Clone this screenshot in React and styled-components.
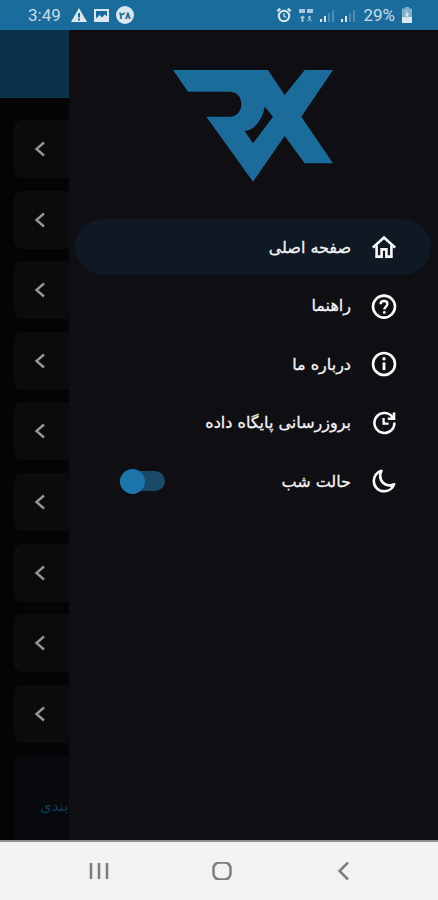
import styled, { createGlobalStyle } from "styled-components";

const GlobalStyle = createGlobalStyle`
  html, body {
    margin: 0;
    padding: 0;
    background: #000;
  }
  * {
    box-sizing: border-box;
  }
`;

const CARD_COUNT = 9;

const MENU = [
  { label: "صفحه اصلی", icon: <HomeIcon />, active: true },
  { label: "راهنما", icon: <HelpIcon /> },
  { label: "درباره ما", icon: <InfoIcon /> },
  { label: "بروزرسانی پایگاه داده", icon: <UpdateIcon /> },
  { label: "حالت شب", icon: <MoonIcon />, toggle: true },
];

export default function App() {
  return (
    <>
      <GlobalStyle />
      <Screen>
        <StatusBar>
          <StatusGroup>
            <Clock>3:49</Clock>
            <WarningIcon />
            <PictureIcon />
            <DateBadge>۲۸</DateBadge>
          </StatusGroup>
          <StatusGroup>
            <AlarmIcon />
            <NetworkIcon />
            <SignalIcon />
            <SignalIcon />
            <Percent>29%</Percent>
            <BatteryIcon />
          </StatusGroup>
        </StatusBar>

        <Body>
          <Underlay>
            <UnderHeader />
            <CardList>
              {Array.from({ length: CARD_COUNT }, (_, i) => (
                <Card key={i}>
                  <ChevronIcon />
                </Card>
              ))}
              <BottomCard>
                <BottomLabel dir="rtl">دسته بندی</BottomLabel>
              </BottomCard>
            </CardList>
          </Underlay>

          <Drawer>
            <LogoIcon />
            <Menu>
              {MENU.map((item) => (
                <MenuRow key={item.label} dir="rtl" $active={item.active}>
                  <MenuIcon>{item.icon}</MenuIcon>
                  <MenuLabel>{item.label}</MenuLabel>
                  {item.toggle && (
                    <Toggle>
                      <Knob />
                    </Toggle>
                  )}
                </MenuRow>
              ))}
            </Menu>
          </Drawer>
        </Body>

        <NavBar>
          <RecentsIcon />
          <HomeButtonIcon />
          <BackIcon />
        </NavBar>
      </Screen>
    </>
  );
}

function LogoIcon() {
  return (
    <LogoSvg viewBox="100 60 480 336" aria-hidden="true">
      <path
        fill="#1b6b9b"
        fillRule="evenodd"
        d="M100 60H385L435 135L495 60H580L485 200L580 340H495L435 258L340 395L200 200H270C292 200 305 183 305 162C305 141 292 125 270 125H145ZM375 170L400 200L340 280L315 243C345 240 368 210 375 170Z"
      />
    </LogoSvg>
  );
}

function HomeIcon() {
  return (
    <svg viewBox="0 0 26 26" width="26" height="26" fill="none" stroke="#fff" strokeWidth="2.6">
      <path d="M1.8 13.6L13 3.6L24.2 13.6" />
      <path d="M5.6 11.5V22.6H10.6V15.4H15.4V22.6H20.4V11.5" />
    </svg>
  );
}

function HelpIcon() {
  return (
    <svg viewBox="0 0 26 26" width="26" height="26" fill="none" stroke="#fff" strokeWidth="2.6">
      <circle cx="13" cy="13.6" r="11" />
      <path d="M9.6 11.2C9.6 9.2 11 8 13 8C15 8 16.4 9.2 16.4 11C16.4 13.4 13.3 13.8 13.3 16.6" strokeWidth="2.4" />
      <circle cx="13.3" cy="19.4" r="1.4" fill="#fff" stroke="none" />
    </svg>
  );
}

function InfoIcon() {
  return (
    <svg viewBox="0 0 26 26" width="26" height="26" fill="none" stroke="#fff" strokeWidth="2.6">
      <circle cx="13" cy="13" r="11" />
      <path d="M13 11.5V19" strokeWidth="2.8" />
      <circle cx="13" cy="7.8" r="1.7" fill="#fff" stroke="none" />
    </svg>
  );
}

function UpdateIcon() {
  return (
    <svg viewBox="0 0 26 26" width="26" height="26" fill="none" stroke="#fff" strokeWidth="2.6">
      <path d="M21.8 7.5A10 10 0 1 0 23.4 13.5" strokeLinecap="round" />
      <path d="M23 2.5V8.8H16.8" />
      <path d="M12.6 8V13.6H17.6" strokeWidth="2.3" />
    </svg>
  );
}

function MoonIcon() {
  return (
    <svg viewBox="0 0 26 26" width="26" height="26" fill="none" stroke="#fff" strokeWidth="2.6" strokeLinejoin="round">
      <path d="M10.5 2.8C6 4 2.8 8.2 2.8 13C2.8 18.8 7.4 23.3 13.2 23.3C17.8 23.3 21.8 20.3 23.2 16.2C21.8 17 20.2 17.4 18.4 17.4C13.6 17.4 9.2 13.4 9.2 8C9.2 6 9.6 4.4 10.5 2.8Z" />
    </svg>
  );
}

function ChevronIcon() {
  return (
    <ChevronSvg viewBox="0 0 12 16" aria-hidden="true">
      <path d="M10 1.5L2.5 8L10 14.5" />
    </ChevronSvg>
  );
}

function WarningIcon() {
  return (
    <svg viewBox="0 0 16 14" width="16" height="14">
      <path fill="#dce8ef" fillRule="evenodd" d="M8 0L16 14H0ZM7 5V9.6H9V5ZM7 10.6V12.4H9V10.6Z" />
    </svg>
  );
}

function PictureIcon() {
  return (
    <svg viewBox="0 0 15 13" width="15" height="13">
      <path fill="#dce8ef" fillRule="evenodd" d="M0 0H15V13H0ZM2 2V9.5L5.5 6L8 8.5L11 5.5L13 7.5V2Z" />
    </svg>
  );
}

function AlarmIcon() {
  return (
    <svg viewBox="0 0 16 16" width="16" height="16">
      <circle cx="8" cy="9" r="5.2" fill="none" stroke="#dce8ef" strokeWidth="2" />
      <path d="M8 6V9.2L10 10.4" fill="none" stroke="#dce8ef" strokeWidth="1.2" />
      <path fill="#dce8ef" d="M0.6 3.4L3.4 0.8L5 2.4L2 5ZM15.4 3.4L12.6 0.8L11 2.4L14 5Z" />
    </svg>
  );
}

function NetworkIcon() {
  return (
    <svg viewBox="0 0 14 15" width="14" height="15" fill="#a9c8da">
      <path d="M0 1H6V5H0ZM8 1H14V5H8ZM2.5 8H4.5V14H2.5ZM0.8 10L3.5 7.4L6.2 10ZM9.5 8H11.5V14H9.5ZM7.8 12L10.5 14.6L13.2 12Z" />
    </svg>
  );
}

function SignalIcon() {
  return (
    <svg viewBox="0 0 14 14" width="14" height="14">
      <rect x="0" y="11" width="2" height="3" fill="#dce8ef" />
      <rect x="4" y="8" width="2" height="6" fill="#dce8ef" />
      <rect x="8" y="5" width="2" height="9" fill="#4d8cb2" />
      <rect x="12" y="2" width="2" height="12" fill="#4d8cb2" />
    </svg>
  );
}

function BatteryIcon() {
  return (
    <svg viewBox="0 0 10 16" width="10" height="16">
      <path fill="#7fb0cc" d="M3 0H7V1.5H10V16H0V1.5H3Z" />
      <path fill="#dce8ef" d="M0 10H10V16H0ZM5.6 2.5L3 8.5H5L4.4 12L7 6.5H5Z" />
    </svg>
  );
}

function RecentsIcon() {
  return (
    <NavSvg viewBox="0 0 20 18" aria-hidden="true">
      <path d="M2 1V17M10 1V17M18 1V17" />
    </NavSvg>
  );
}

function HomeButtonIcon() {
  return (
    <NavSvg viewBox="0 0 20 18" aria-hidden="true">
      <rect x="1.5" y="0.5" width="17" height="17" rx="6" />
    </NavSvg>
  );
}

function BackIcon() {
  return (
    <NavSvg viewBox="0 0 20 18" aria-hidden="true">
      <path d="M14 0.5L5.5 9L14 17.5" />
    </NavSvg>
  );
}

const Screen = styled.div`
  width: 438px;
  height: 900px;
  display: flex;
  flex-direction: column;
  overflow: hidden;
`;

const StatusBar = styled.div`
  height: 30px;
  flex: none;
  display: flex;
  align-items: center;
  justify-content: space-between;
  padding: 0 26px 0 28px;
  background: #1a6c9d;
  color: #c9dce8;
  font-family: Roboto, sans-serif;
`;

const StatusGroup = styled.div`
  display: flex;
  align-items: center;
  gap: 7px;
`;

const Clock = styled.span`
  font-size: 17px;
  margin-right: 3px;
`;

const Percent = styled.span`
  font-size: 17px;
  margin-left: 1px;
`;

const DateBadge = styled.span`
  width: 18px;
  height: 18px;
  border-radius: 50%;
  background: #dce8ef;
  color: #1a6c9d;
  font-family: "DejaVu Sans", sans-serif;
  font-size: 10px;
  font-weight: 700;
  display: flex;
  align-items: center;
  justify-content: center;
`;

const Body = styled.div`
  flex: 1;
  min-height: 0;
  display: flex;
`;

const Underlay = styled.div`
  width: 69px;
  flex: none;
  overflow: hidden;
  background: #040405;
`;

const UnderHeader = styled.div`
  height: 68px;
  background: #0a3249;
`;

const CardList = styled.div`
  width: 424px;
  padding: 22px 0 0 14px;
  display: flex;
  flex-direction: column;
  gap: 12.6px;
`;

const Card = styled.div`
  height: 58px;
  flex: none;
  border-radius: 8px;
  background: #0b0b0e;
  display: flex;
  align-items: center;
  padding-left: 20px;
`;

const ChevronSvg = styled.svg`
  width: 12px;
  height: 16px;
  fill: none;
  stroke: #969699;
  stroke-width: 2.4;
`;

const BottomCard = styled(Card)`
  height: 90px;
  margin-top: 0;
  background: #07090c;
  padding: 12px 0 0 26px;
`;

const BottomLabel = styled.span`
  font-family: "DejaVu Sans", sans-serif;
  font-size: 15px;
  color: #0f3c58;
`;

const Drawer = styled.div`
  flex: 1;
  background: #0e0e13;
  padding: 40px 7px 0 6px;
  display: flex;
  flex-direction: column;
`;

const LogoSvg = styled.svg`
  width: 160px;
  height: 112px;
  margin: 0 0 37px 98px;
  flex: none;
`;

const Menu = styled.nav`
  display: flex;
  flex-direction: column;
  gap: 2.5px;
`;

const MenuRow = styled.div`
  height: 56px;
  display: flex;
  align-items: center;
  gap: 20px;
  padding: 0 34px 0 45px;
  border-radius: 28px;
  background: ${(props) => (props.$active ? "#0f1823" : "transparent")};
`;

const MenuIcon = styled.span`
  width: 26px;
  height: 26px;
  flex: none;
  display: flex;
`;

const MenuLabel = styled.span`
  font-family: "DejaVu Sans", sans-serif;
  font-size: 16px;
  color: #f4f4f4;
  -webkit-text-stroke: 0.3px #f4f4f4;
`;

const Toggle = styled.div`
  width: 45px;
  height: 20px;
  margin-right: auto;
  border-radius: 10px;
  background: #1a4a66;
  display: flex;
  align-items: center;
  justify-content: flex-end;
`;

const Knob = styled.div`
  width: 25px;
  height: 25px;
  flex: none;
  border-radius: 50%;
  background: #1c76ab;
`;

const NavBar = styled.div`
  height: 60px;
  flex: none;
  background: #f2f2f2;
  border-top: 2px solid #8f8f8f;
  display: flex;
  align-items: center;
  justify-content: space-between;
  padding: 0 84px 0 89px;
`;

const NavSvg = styled.svg`
  width: 20px;
  height: 18px;
  fill: none;
  stroke: #7d7d7d;
  stroke-width: 2.5;
`;
